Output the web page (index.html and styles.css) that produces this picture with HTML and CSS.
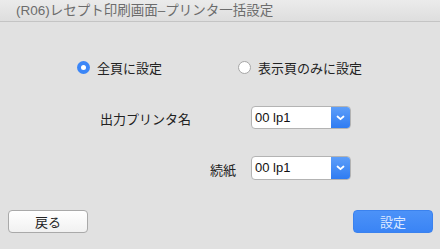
FILE: index.html
```html
<!DOCTYPE html>
<html lang="ja">
<head>
  <meta charset="UTF-8">
  <meta name="viewport" content="width=device-width, initial-scale=1.0">
  <title>(R06)レセプト印刷画面–プリンタ一括設定</title>
  <link rel="stylesheet" href="styles.css">
</head>
<body>
  <div class="window">
    <div class="titlebar">(R06)レセプト印刷画面–プリンタ一括設定</div>

    <div class="radios">
      <label class="option first">
        <span class="radio checked"></span>
        <span>全頁に設定</span>
      </label>
      <label class="option">
        <span class="radio"></span>
        <span>表示頁のみに設定</span>
      </label>
    </div>

    <div class="row printer">
      <span class="label">出力プリンタ名</span>
      <div class="select">
        <span class="value">00 lp1</span>
        <span class="arrow">
          <svg width="9" height="6" viewBox="0 0 9 6"><path d="M1.5 1.5 L4.5 4.2 L7.5 1.5" fill="none" stroke="#fff" stroke-width="1.8" stroke-linecap="round" stroke-linejoin="round"/></svg>
        </span>
      </div>
    </div>

    <div class="row paper">
      <span class="label">続紙</span>
      <div class="select">
        <span class="value">00 lp1</span>
        <span class="arrow">
          <svg width="9" height="6" viewBox="0 0 9 6"><path d="M1.5 1.5 L4.5 4.2 L7.5 1.5" fill="none" stroke="#fff" stroke-width="1.8" stroke-linecap="round" stroke-linejoin="round"/></svg>
        </span>
      </div>
    </div>

    <div class="buttons">
      <button class="btn back">戻る</button>
      <button class="btn primary">設定</button>
    </div>
  </div>
</body>
</html>
```

FILE: styles.css
```css
body {
  margin: 0;
  padding: 0;
  font-family: "Liberation Sans", "Noto Sans CJK JP", sans-serif;
  font-size: 13px;
  color: #222;
  background-color: #e1e1e1;
}

.window {
  width: 440px;
  height: 249px;
  display: flex;
  flex-direction: column;
  background-color: #e1e1e1;
}

.titlebar {
  height: 21px;
  line-height: 21px;
  padding-left: 16px;
  font-size: 13.5px;
  color: #6c6c6c;
  background: linear-gradient(#ebebeb, #dedede);
  border-bottom: 1px solid #c4c4c4;
  white-space: nowrap;
}

.radios {
  display: flex;
  align-items: center;
  height: 24px;
  margin-top: 33px;
  padding-left: 77px;
}

.option {
  display: flex;
  align-items: center;
  gap: 7px;
}

.option.first {
  width: 161px;
}

.radio {
  flex-shrink: 0;
  width: 13px;
  height: 13px;
  box-sizing: border-box;
  border-radius: 50%;
  border: 1px solid #a6a6a6;
  background-color: #fff;
  display: flex;
  align-items: center;
  justify-content: center;
}

.radio.checked {
  border: none;
  background-color: #3b86f7;
}

.radio.checked::after {
  content: "";
  width: 5px;
  height: 5px;
  border-radius: 50%;
  background-color: #fff;
}

.row {
  display: flex;
  align-items: center;
  height: 23px;
  margin-top: 27px;
}

.row .label {
  flex-shrink: 0;
  width: 251px;
  box-sizing: border-box;
  padding-left: 100px;
  margin-top: 2px;
}

.row.paper .label {
  padding-left: 0;
  padding-right: 15px;
  margin-top: 4px;
  text-align: right;
}

.select {
  display: flex;
  width: 100px;
  height: 23px;
  box-sizing: border-box;
  border: 1px solid #b3b3b3;
  border-radius: 4px;
  background-color: #fff;
  overflow: hidden;
}

.row.paper .select {
  height: 24px;
}

.select .value {
  flex: 1;
  padding-left: 3px;
  display: flex;
  align-items: center;
  color: #111;
}

.select .arrow {
  width: 19px;
  display: flex;
  align-items: center;
  justify-content: center;
  background: linear-gradient(#5d9ef9, #2f7cf2);
}

.buttons {
  display: flex;
  justify-content: space-between;
  margin-top: 31px;
  padding: 0 7px 0 8px;
}

.btn {
  width: 80px;
  height: 23px;
  border-radius: 4px;
  font-family: "Liberation Sans", "Noto Sans CJK JP", sans-serif;
  font-size: 13px;
  padding: 0;
}

.btn.back {
  border: 1px solid #a9a9a9;
  background: linear-gradient(#ffffff, #f1f1f1);
  color: #222;
}

.btn.primary {
  border: 1px solid #3b82ee;
  background: linear-gradient(#4c92f8, #3a84f5);
  color: #dbe8ff;
}
```
